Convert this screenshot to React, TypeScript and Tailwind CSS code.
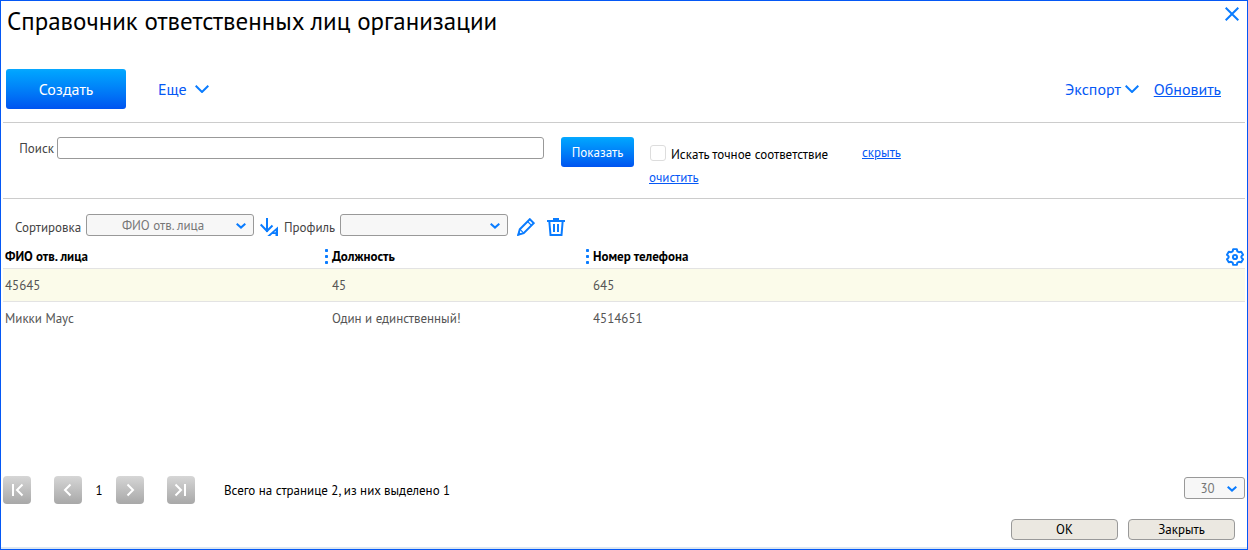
import { useState } from "react";
import type { ReactNode } from "react";

type Person = {
  name: string;
  position: string;
  phone: string;
};

const people: Person[] = [
  { name: "45645", position: "45", phone: "645" },
  { name: "Микки Маус", position: "Один и единственный!", phone: "4514651" },
];

function Chevron({ className }: { className: string }) {
  return (
    <svg viewBox="0 0 14 8" className={className} fill="none" stroke="#0a7cff" aria-hidden="true">
      <path d="M0.7 0.7 7 7 13.3 0.7" strokeWidth="2" />
    </svg>
  );
}

type SelectProps = {
  id: string;
  className: string;
  label?: string;
  options: string[];
};

function Select({ id, className, label, options }: SelectProps) {
  return (
    <div className={`relative ${className}`}>
      <select
        id={id}
        aria-label={label}
        className="block h-[22px] w-full appearance-none rounded-[3px] border border-[#999] bg-[#f7f7f7] pt-px pr-[14px] text-center text-[13px] text-[#777] [text-align-last:center]"
      >
        {options.map((o) => (
          <option key={o}>{o}</option>
        ))}
      </select>
      <svg
        viewBox="0 0 10 6"
        className="pointer-events-none absolute top-[9px] right-2 h-[6px] w-[10px]"
        fill="none"
        stroke="#0a7cff"
        strokeWidth="2"
        aria-hidden="true"
      >
        <path d="M0.7 0.8 5 4.6 9.3 0.8" />
      </svg>
    </div>
  );
}

function PagerButton({ label, children }: { label: string; children: ReactNode }) {
  return (
    <button
      type="button"
      aria-label={label}
      className="flex size-7 items-center justify-center rounded-[4px] bg-linear-to-b from-[#d6d6d6] to-[#a8a8a8]"
    >
      <svg viewBox="0 0 28 28" className="size-7" fill="none" stroke="#fff" strokeWidth="2">
        {children}
      </svg>
    </button>
  );
}

function ColumnGrip() {
  return (
    <svg viewBox="0 0 3 15" className="h-[15px] w-[3px] shrink-0" fill="#0a7cff" aria-hidden="true">
      <rect width="3" height="3" rx="0.8" />
      <rect y="6" width="3" height="3" rx="0.8" />
      <rect y="12" width="3" height="3" rx="0.8" />
    </svg>
  );
}

export default function App() {
  const [query, setQuery] = useState("");
  const [exact, setExact] = useState(false);

  return (
    <div className="flex min-h-screen flex-col border border-[#0558f5] bg-white font-['PT_Sans','Noto_Sans',sans-serif] text-[13px] leading-[17px] text-black">
      <header className="flex h-[60px] items-start justify-between pt-1 pr-2 pl-[6px]">
        <h1 className="text-[25px] leading-8">Справочник ответственных лиц организации</h1>
        <button type="button" aria-label="Закрыть окно" className="pt-[2px]">
          <svg viewBox="0 0 14 14" className="size-[14px]" fill="none" stroke="#0a7cff" strokeWidth="2">
            <path d="M0.7 0.7 13.3 13.3M13.3 0.7 0.7 13.3" />
          </svg>
        </button>
      </header>

      <main className="flex flex-1 flex-col px-[2px]">
        <div className="flex h-[62px] items-start justify-between border-b border-[#ccc] pt-2 pr-6 pl-[3px] text-base text-[#0558f5]">
          <div className="flex h-10 items-center gap-8">
            <button
              type="button"
              className="h-10 w-[120px] rounded-[3px] bg-linear-to-b from-[#08a8ff] to-[#0053f0] text-white"
            >
              Создать
            </button>
            <button type="button" className="flex items-center gap-2">
              Еще
              <Chevron className="h-2 w-[14px]" />
            </button>
          </div>
          <div className="flex h-10 items-center gap-[15px]">
            <button type="button" className="flex items-center gap-1">
              Экспорт
              <Chevron className="h-2 w-[14px]" />
            </button>
            <a href="#refresh" className="underline">
              Обновить
            </a>
          </div>
        </div>

        <form
          onSubmit={(e) => e.preventDefault()}
          className="flex h-[76px] items-start border-b border-[#ccc] pt-[14px] pl-4"
        >
          <div className="flex items-center gap-[3px]">
            <label htmlFor="search" className="w-[35px] pt-px text-right text-[#444]">
              Поиск
            </label>
            <input
              id="search"
              type="text"
              value={query}
              onChange={(e) => setQuery(e.target.value)}
              className="h-[22px] w-[487px] rounded-[3px] border border-[#999] px-1"
            />
          </div>
          <button
            type="submit"
            className="ml-[17px] h-[30px] w-[73px] rounded-[3px] bg-linear-to-b from-[#08a8ff] to-[#0053f0] text-white"
          >
            Показать
          </button>
          <div className="ml-[15px] flex w-[185px] flex-col items-start">
            <label className="flex h-8 items-center gap-[5px] pl-px">
              <input
                type="checkbox"
                checked={exact}
                onChange={(e) => setExact(e.target.checked)}
                className="size-4 appearance-none rounded-[3px] border border-[#ddd] bg-white checked:bg-[#0a7cff]"
              />
              <span className="pt-[2px]">Искать точное соответствие</span>
            </label>
            <a href="#clear" className="text-[#0558f5] underline">
              очистить
            </a>
          </div>
          <a href="#hide" className="mt-[7px] ml-7 text-[#0558f5] underline">
            скрыть
          </a>
        </form>

        <div className="flex items-center pt-[15px] pl-3 text-[#444]">
          <label htmlFor="sort" className="w-[71px] pt-1">
            Сортировка
          </label>
          <Select id="sort" className="w-[168px]" options={["ФИО отв. лица", "Должность", "Номер телефона"]} />
          <button type="button" aria-label="Порядок сортировки" className="ml-[6px] pt-1">
            <svg viewBox="0 0 18 18" className="size-[18px]" fill="none" stroke="#0a7cff" strokeWidth="2">
              <path d="M7 0V14M0.7 6.5 7 13 12.5 7.5" />
              <path fill="#0a7cff" fillRule="evenodd" stroke="none" d="M7.300 18 18 8.500V18H15.500V16H12.300L10.200 18ZM14 14.300H15.700V12.700Z" />
            </svg>
          </button>
          <label htmlFor="profile" className="ml-[6px] w-14 pt-1">
            Профиль
          </label>
          <Select id="profile" className="w-[168px]" options={[""]} />
          <button type="button" aria-label="Изменить" className="ml-[9px] pt-1">
            <svg viewBox="0 0 18 18" className="size-[18px]" fill="none" stroke="#0a7cff" strokeWidth="2">
              <path d="M1.3 16.7 2.8 11.2 12.8 1.2 16.7 5.1 6.7 15.2Z" />
              <path d="M2.8 11.2 6.7 15.2M10.6 3.5 14.5 7.4" strokeWidth="1.2" />
              <path d="M0.300 17.700 1.500 13.500 4.500 16.500Z" fill="#0a7cff" stroke="none" />
            </svg>
          </button>
          <button type="button" aria-label="Удалить" className="ml-3 pt-1">
            <svg viewBox="0 0 18 18" className="size-[18px]" fill="none" stroke="#0a7cff" strokeWidth="2">
              <path d="M0 3H18M6 1H12M2.3 3 3.5 17H14.5L15.7 3M7 6V14M11 6V14" />
            </svg>
          </button>
        </div>

        <table className="mt-[9px] w-full table-fixed border-collapse text-left">
          <colgroup>
            <col className="w-[322px]" />
            <col className="w-[261px]" />
            <col />
          </colgroup>
          <thead>
            <tr className="h-[23px] border-b border-[#e3e3e3]">
              <th className="pt-px pl-[2px]">ФИО отв. лица</th>
              <th className="pt-px">
                <div className="flex items-center gap-1">
                  <ColumnGrip />
                  Должность
                </div>
              </th>
              <th className="pt-px">
                <div className="flex items-center gap-1">
                  <ColumnGrip />
                  Номер телефона
                  <button type="button" aria-label="Настройка столбцов" className="mr-px ml-auto">
                    <svg viewBox="0 0 24 24" className="size-[18px]" fill="none" stroke="#0a7cff" strokeWidth="2.6" strokeLinejoin="round">
                      <path d="M9.6 1.5h4.8l.8 3 2.1 1.2 3-.8 2.4 4.1-2.2 2.2v1.6l2.2 2.2-2.4 4.1-3-.8-2.1 1.2-.8 3H9.6l-.8-3-2.1-1.2-3 .8-2.4-4.1 2.2-2.2v-1.6L1.3 9l2.4-4.1 3 .8L8.8 4.5z" />
                      <circle cx="12" cy="12" r="2.8" />
                    </svg>
                  </button>
                </div>
              </th>
            </tr>
          </thead>
          <tbody className="text-[#555]">
            {people.map((p) => (
              <tr key={p.phone} className="h-[33px] border-[#e3e3e3] first:border-b first:bg-[#fbfbea]">
                <td className="pt-px pl-[2px]">{p.name}</td>
                <td className="pt-px pl-[7px]">{p.position}</td>
                <td className="pt-px pl-[7px]">{p.phone}</td>
              </tr>
            ))}
          </tbody>
        </table>

        <div className="mt-auto flex items-center justify-between">
          <div className="flex items-center">
            <PagerButton label="Первая страница">
              <path d="M10 8V20M19.5 8.5 14 14 19.5 19.5" />
            </PagerButton>
            <div className="ml-[23px] flex items-center">
              <PagerButton label="Предыдущая страница">
                <path d="M16.5 8.5 11 14 16.5 19.5" />
              </PagerButton>
              <span className="w-[34px] pt-px text-center">1</span>
              <PagerButton label="Следующая страница">
                <path d="M11.5 8.5 17 14 11.5 19.5" />
              </PagerButton>
            </div>
            <div className="ml-[23px] flex items-center">
              <PagerButton label="Последняя страница">
                <path d="M18 8V20M8.5 8.5 14 14 8.5 19.5" />
              </PagerButton>
            </div>
            <p className="ml-[29px] pt-px">Всего на странице 2, из них выделено 1</p>
          </div>
          <Select id="page-size" label="Строк на странице" className="mb-1 w-[61px]" options={["30", "50", "100"]} />
        </div>
      </main>

      <footer className="flex justify-end gap-[10px] border-b-2 border-[#dde7f0] pt-[15px] pr-3 pb-[7px]">
        <button type="button" className="h-[21px] w-[107px] rounded-[4px] border border-[#999] bg-[#ebe8e1]">
          ОК
        </button>
        <button type="button" className="h-[21px] w-[107px] rounded-[4px] border border-[#999] bg-[#ebe8e1]">
          Закрыть
        </button>
      </footer>
    </div>
  );
}
